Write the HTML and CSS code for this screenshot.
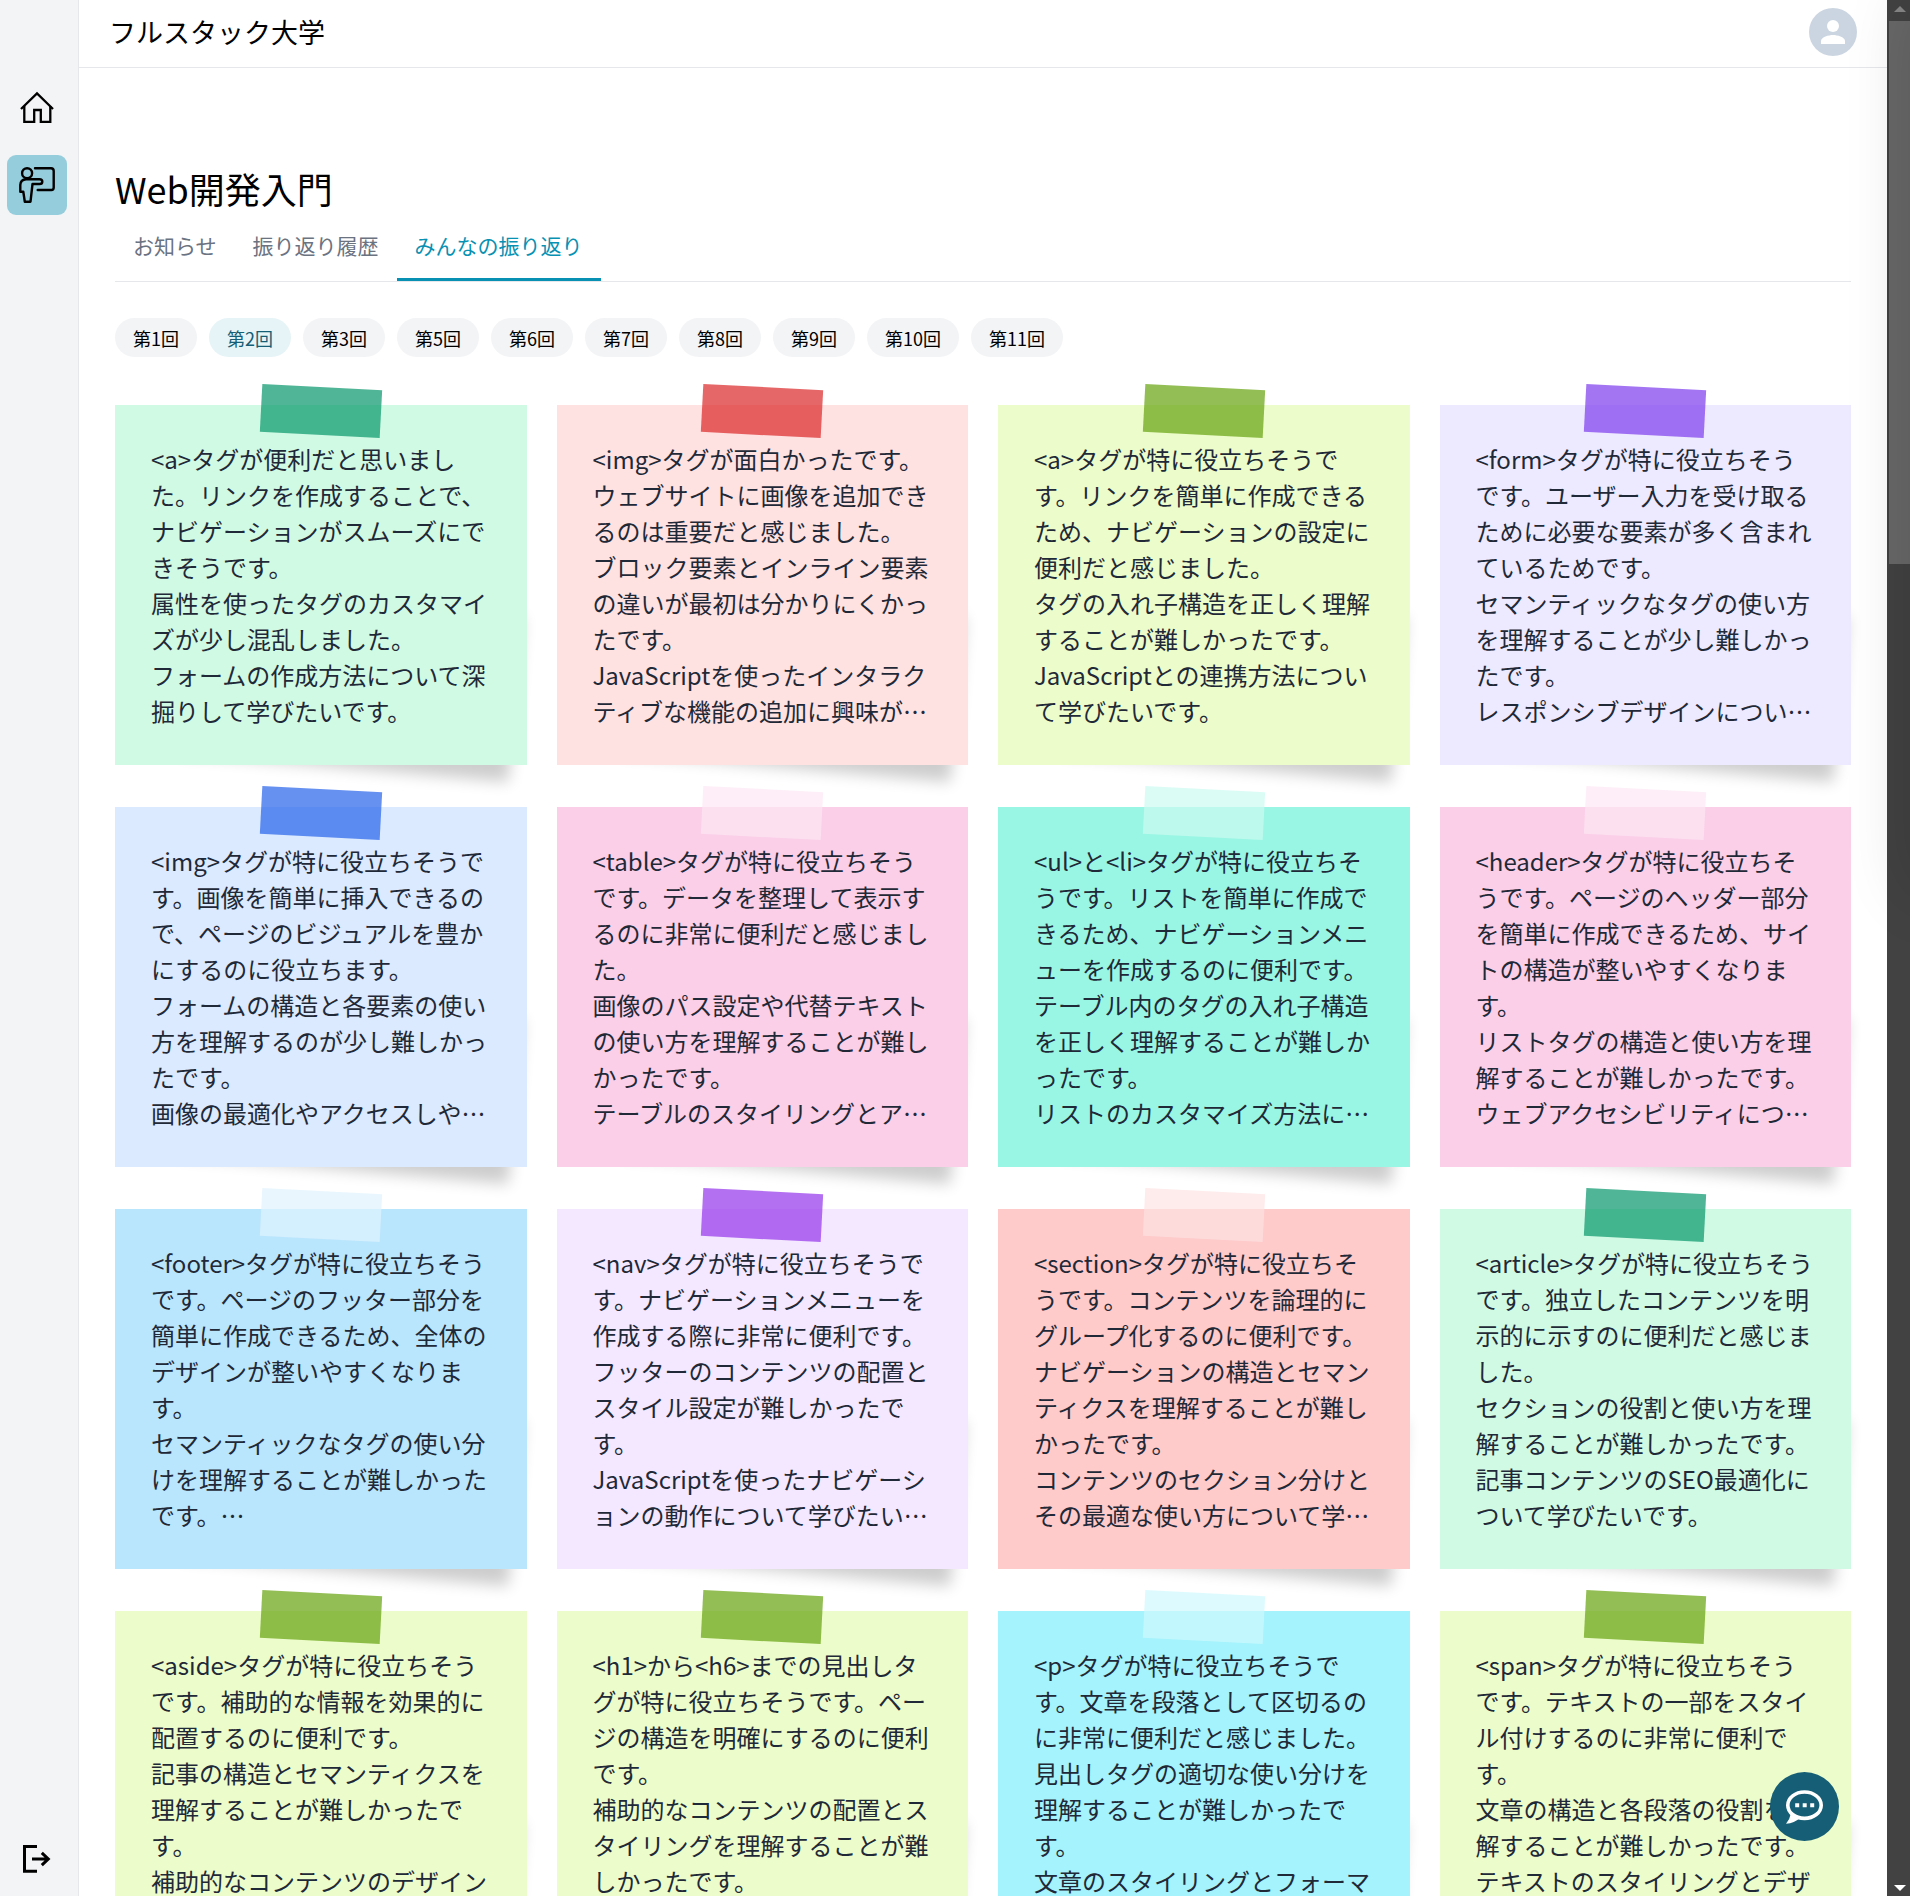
FILE: index.html
```html
<!DOCTYPE html>
<html lang="ja">

<head>
    <meta charset="UTF-8">
    <meta name="viewport" content="width=device-width, initial-scale=1.0">
    <title>フルスタック大学</title>
    <link rel="stylesheet" href="styles.css">
</head>

<body>
    <div id="container">
        <nav class="sidebar">
            <a class="nav-item">
                <svg width="36" height="36" viewBox="0 0 36 36" fill="none" stroke="#000" stroke-width="2.3">
                    <path d="M2 20L18 4.4L34 20" />
                    <path d="M5.3 17V32.8H15.2V21H21.8V32.8H31.3V17" />
                </svg>
            </a>
            <a class="nav-item active">
                <svg width="36" height="36" viewBox="0 0 36 36" fill="none" stroke="#000" stroke-width="2.4" stroke-linejoin="round" stroke-linecap="round">
                    <circle cx="8.1" cy="6.2" r="5" />
                    <path d="M16 1.3H32Q34.7 1.3 34.7 4V20.5Q34.7 23 32.5 23H18.7" />
                    <path d="M7 12.3H20.5Q23.3 12.3 23.3 14.7Q23.3 17 20.5 17H13.5L11.5 34.7H5.8L4.3 24.7H1.3V18Q1.5 12.7 7 12.3Z" />
                </svg>
            </a>
            <a class="nav-item logout">
                <svg width="36" height="36" viewBox="0 0 36 36" fill="none" stroke="#000" stroke-width="3">
                    <path d="M18 5.5H5.5V30.2H18" />
                    <path d="M13 18H30M22.8 11.8L29.3 18L22.8 24.2" />
                </svg>
            </a>
        </nav>

        <div class="main">
            <header class="header">
                <span>フルスタック大学</span>
                <svg class="avatar" width="48" height="48" viewBox="0 0 48 48">
                    <circle cx="24" cy="24" r="24" fill="#cbd5e1" />
                    <circle cx="24" cy="18" r="6" fill="#fff" />
                    <path d="M12 36V33C12 29 20 27 24 27S36 29 36 33V36Z" fill="#fff" />
                </svg>
            </header>

            <div class="content">
                <h1 class="title">Web開発入門</h1>
                <div class="tabs">
                    <div class="tab">お知らせ</div>
                    <div class="tab">振り返り履歴</div>
                    <div class="tab active">みんなの振り返り</div>
                </div>

                <div class="pills">
                    <div class="pill">第1回</div>
                    <div class="pill active">第2回</div>
                    <div class="pill">第3回</div>
                    <div class="pill">第5回</div>
                    <div class="pill">第6回</div>
                    <div class="pill">第7回</div>
                    <div class="pill">第8回</div>
                    <div class="pill">第9回</div>
                    <div class="pill">第10回</div>
                    <div class="pill">第11回</div>
                </div>

                <div class="notes">
                    <div class="note emerald">
                        <p>&lt;a&gt;タグが便利だと思いました。リンクを作成することで、ナビゲーションがスムーズにできそうです。<br>属性を使ったタグのカスタマイズが少し混乱しました。<br>フォームの作成方法について深掘りして学びたいです。</p>
                    </div>
                    <div class="note red">
                        <p>&lt;img&gt;タグが面白かったです。ウェブサイトに画像を追加できるのは重要だと感じました。<br>ブロック要素とインライン要素の違いが最初は分かりにくかったです。<br>JavaScriptを使ったインタラクティブな機能の追加に興味が…</p>
                    </div>
                    <div class="note lime">
                        <p>&lt;a&gt;タグが特に役立ちそうです。リンクを簡単に作成できるため、ナビゲーションの設定に便利だと感じました。<br>タグの入れ子構造を正しく理解することが難しかったです。<br>JavaScriptとの連携方法について学びたいです。</p>
                    </div>
                    <div class="note violet">
                        <p>&lt;form&gt;タグが特に役立ちそうです。ユーザー入力を受け取るために必要な要素が多く含まれているためです。<br>セマンティックなタグの使い方を理解することが少し難しかったです。<br>レスポンシブデザインについ…</p>
                    </div>

                    <div class="note blue">
                        <p>&lt;img&gt;タグが特に役立ちそうです。画像を簡単に挿入できるので、ページのビジュアルを豊かにするのに役立ちます。<br>フォームの構造と各要素の使い方を理解するのが少し難しかったです。<br>画像の最適化やアクセスしや…</p>
                    </div>
                    <div class="note pink">
                        <p>&lt;table&gt;タグが特に役立ちそうです。データを整理して表示するのに非常に便利だと感じました。<br>画像のパス設定や代替テキストの使い方を理解することが難しかったです。<br>テーブルのスタイリングとア…</p>
                    </div>
                    <div class="note teal">
                        <p>&lt;ul&gt;と&lt;li&gt;タグが特に役立ちそうです。リストを簡単に作成できるため、ナビゲーションメニューを作成するのに便利です。<br>テーブル内のタグの入れ子構造を正しく理解することが難しかったです。<br>リストのカスタマイズ方法に…</p>
                    </div>
                    <div class="note pink">
                        <p>&lt;header&gt;タグが特に役立ちそうです。ページのヘッダー部分を簡単に作成できるため、サイトの構造が整いやすくなります。<br>リストタグの構造と使い方を理解することが難しかったです。<br>ウェブアクセシビリティにつ…</p>
                    </div>

                    <div class="note sky">
                        <p>&lt;footer&gt;タグが特に役立ちそうです。ページのフッター部分を簡単に作成できるため、全体のデザインが整いやすくなります。<br>セマンティックなタグの使い分けを理解することが難しかったです。…</p>
                    </div>
                    <div class="note purple">
                        <p>&lt;nav&gt;タグが特に役立ちそうです。ナビゲーションメニューを作成する際に非常に便利です。<br>フッターのコンテンツの配置とスタイル設定が難しかったです。<br>JavaScriptを使ったナビゲーションの動作について学びたい…</p>
                    </div>
                    <div class="note rose">
                        <p>&lt;section&gt;タグが特に役立ちそうです。コンテンツを論理的にグループ化するのに便利です。<br>ナビゲーションの構造とセマンティクスを理解することが難しかったです。<br>コンテンツのセクション分けとその最適な使い方について学…</p>
                    </div>
                    <div class="note emerald">
                        <p>&lt;article&gt;タグが特に役立ちそうです。独立したコンテンツを明示的に示すのに便利だと感じました。<br>セクションの役割と使い方を理解することが難しかったです。<br>記事コンテンツのSEO最適化について学びたいです。</p>
                    </div>

                    <div class="note lime">
                        <p>&lt;aside&gt;タグが特に役立ちそうです。補助的な情報を効果的に配置するのに便利です。<br>記事の構造とセマンティクスを理解することが難しかったです。<br>補助的なコンテンツのデザイン</p>
                    </div>
                    <div class="note lime">
                        <p>&lt;h1&gt;から&lt;h6&gt;までの見出しタグが特に役立ちそうです。ページの構造を明確にするのに便利です。<br>補助的なコンテンツの配置とスタイリングを理解することが難しかったです。</p>
                    </div>
                    <div class="note cyan">
                        <p>&lt;p&gt;タグが特に役立ちそうです。文章を段落として区切るのに非常に便利だと感じました。<br>見出しタグの適切な使い分けを理解することが難しかったです。<br>文章のスタイリングとフォーマ</p>
                    </div>
                    <div class="note lime">
                        <p>&lt;span&gt;タグが特に役立ちそうです。テキストの一部をスタイル付けするのに非常に便利です。<br>文章の構造と各段落の役割を理解することが難しかったです。<br>テキストのスタイリングとデザ</p>
                    </div>
                </div>
            </div>
        </div>

        <div class="scrollbar">
            <div class="arrow arrow-up"></div>
            <div class="thumb"></div>
            <div class="arrow arrow-down"></div>
        </div>
    </div>

    <button class="chat-btn">
        <svg width="39" height="36" viewBox="0 0 39 36">
            <path d="M6 24Q5 30 1 34.8Q9.5 34 15 29Z" fill="#fff" />
            <ellipse cx="19.5" cy="16.2" rx="16.7" ry="13.2" fill="#155e75" stroke="#fff" stroke-width="3.6" />
            <path d="M10.2 14.2h4v4h-4zM17.7 14.2h4v4h-4zM25.2 14.2h4v4h-4z" fill="#fff" />
        </svg>
    </button>

    <!-- closed drawer, only its shadow shows -->
    <div class="drawer"></div>
</body>

</html>
```
FILE: styles.css
```css
* {
    box-sizing: border-box;
    padding: 0;
    margin: 0;
}

body {
    height: 1896px;
    overflow: hidden;
    background-color: white;
    color: black;
    font-family: "Noto Sans CJK JP", sans-serif;
}

#container {
    display: flex;
    height: 1896px;
    overflow: hidden;
}

.sidebar {
    width: 79px;
    flex-shrink: 0;
    display: flex;
    flex-direction: column;
    gap: 18px;
    padding: 77px 0 7px 7px;
    background-color: #f3f4f6;
    border-right: 1px solid #e5e7eb;
}

.nav-item {
    width: 60px;
    height: 60px;
    display: flex;
    align-items: center;
    justify-content: center;
    border-radius: 9px;
}

.nav-item.active {
    background-color: #96cddc;
}

.logout {
    margin-top: auto;
}

.main {
    flex: 1;
    min-width: 0;
}

.header {
    height: 68px;
    padding: 0 30px 3px;
    display: flex;
    align-items: center;
    justify-content: space-between;
    border-bottom: 1px solid #e5e7eb;
    font-size: 27px;
}

.header span {
    margin-bottom: 2px;
}

.content {
    padding: 93px 36px 0;
}

.title {
    font-size: 36px;
    font-weight: 400;
    line-height: 54px;
}

.tabs {
    height: 67px;
    display: flex;
    border-bottom: 1px solid #e5e7eb;
}

.tab {
    padding: 14px 18px 0;
    font-size: 21px;
    line-height: 32px;
    color: #6b7280;
}

.tab.active {
    color: #0891b2;
    border-bottom: 3px solid #0891b2;
}

.pills {
    display: flex;
    gap: 12px;
    margin-top: 36px;
}

.pill {
    height: 39px;
    padding: 0 18px;
    border-radius: 20px;
    background-color: #f3f4f6;
    font-size: 18px;
    line-height: 40px;
}

.pill.active {
    background-color: #e6f4f7;
    color: #155e75;
}

.notes {
    display: grid;
    grid-template-columns: repeat(4, 1fr);
    gap: 42px 30px;
    margin-top: 48px;
    position: relative;
    z-index: 0;
}

.note {
    position: relative;
    height: 360px;
    padding: 36px;
    background-color: var(--paper);
}

.note p {
    height: 288px;
    overflow: hidden;
    font-size: 24px;
    line-height: 36px;
    color: #1f2937;
}

/* tape */
.note::before {
    content: "";
    position: absolute;
    top: -18px;
    left: 50%;
    width: 120px;
    height: 48px;
    margin-left: -60px;
    background-color: var(--tape);
    opacity: 0.7;
    transform: rotate(3deg);
}

/* lifted corner */
.note::after {
    content: "";
    position: absolute;
    z-index: -1;
    right: 8px;
    bottom: 19px;
    width: 80%;
    height: 165px;
    box-shadow: 0 22px 15px rgba(0, 0, 0, 0.2);
    transform: rotate(5deg);
}

.emerald { --paper: #d1fae5; --tape: #059669; }
.red { --paper: #fee2e2; --tape: #dc2626; }
.lime { --paper: #ecfccb; --tape: #65a30d; }
.violet { --paper: #ede9fe; --tape: #7c3aed; }
.blue { --paper: #dbeafe; --tape: #2563eb; }
.pink { --paper: #fbcfe8; --tape: #fce7f3; }
.teal { --paper: #99f6e4; --tape: #ccfbf1; }
.sky { --paper: #bae6fd; --tape: #e0f2fe; }
.purple { --paper: #f3e8ff; --tape: #9333ea; }
.rose { --paper: #fecaca; --tape: #fee2e2; }
.cyan { --paper: #a5f3fc; --tape: #cffafe; }

.scrollbar {
    width: 23px;
    flex-shrink: 0;
    display: flex;
    flex-direction: column;
    align-items: center;
    padding: 6px 0 5px 2px;
    background-color: #424242;
}

.thumb {
    width: 21px;
    height: 543px;
    margin-top: 9px;
    background-color: #686868;
}

.arrow {
    border: 6px solid transparent;
}

.arrow-up {
    border-top: none;
    border-bottom-color: #868686;
}

.arrow-down {
    margin-top: auto;
    border-bottom: none;
    border-top-color: white;
}

.chat-btn {
    position: fixed;
    right: 71px;
    bottom: 55px;
    width: 69px;
    height: 69px;
    display: flex;
    align-items: center;
    justify-content: center;
    border: none;
    border-radius: 50%;
    background-color: #155e75;
}

.drawer {
    position: fixed;
    top: 0;
    left: 1910px;
    width: 480px;
    height: 890px;
    box-shadow: 0 0 60px rgba(0, 0, 0, 0.15);
}
```
